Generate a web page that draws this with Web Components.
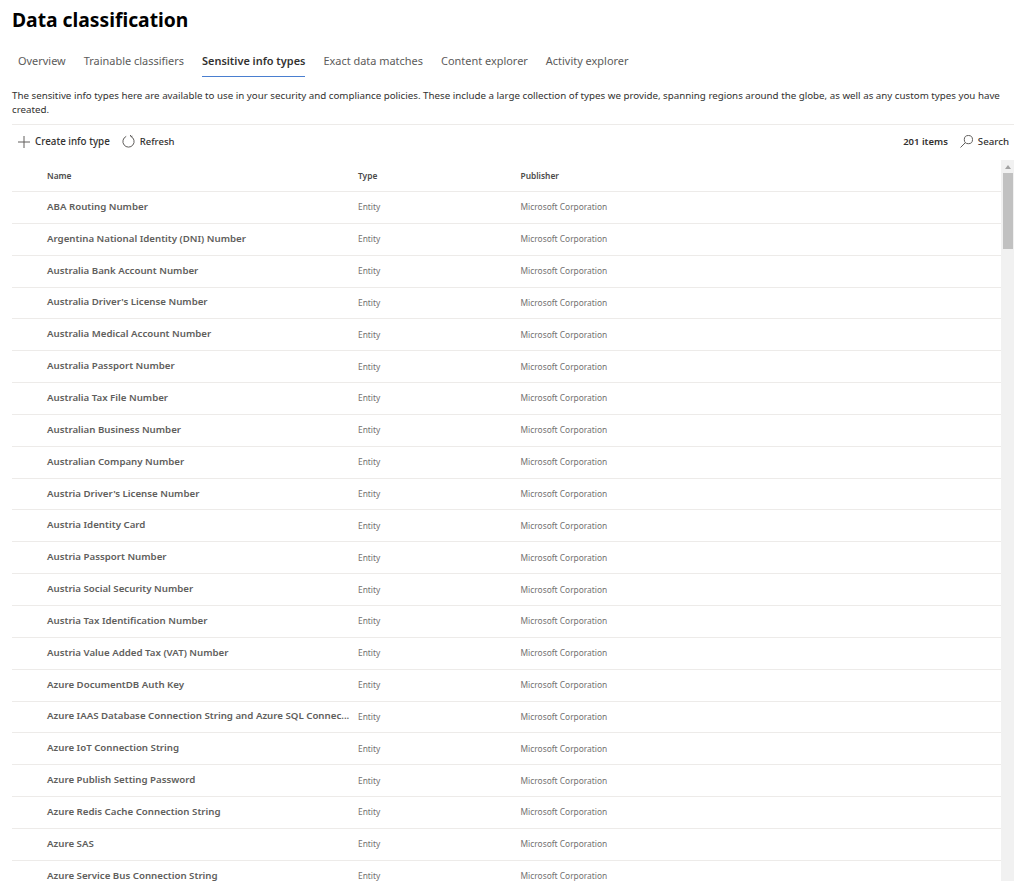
<!DOCTYPE html>
<html lang="en">
<head>
<meta charset="utf-8">
<title>Data classification</title>
<style>
  html, body { margin: 0; height: 881px; overflow: hidden; background: #fff; }
  body { font-family: "Noto Sans", "Open Sans", sans-serif; color: #323130; }
</style>
</head>
<body>
<dc-page></dc-page>

<script>
// Page header with the tab strip
class DcHeader extends HTMLElement {
  constructor() {
    super();
    this.attachShadow({ mode: 'open' });
    const tabs = ['Overview', 'Trainable classifiers', 'Sensitive info types', 'Exact data matches', 'Content explorer', 'Activity explorer'];
    this.shadowRoot.innerHTML = `
      <style>
        :host { display: block; }
        h1 { margin: 0; padding: 8px 0 0 0; font-size: 19.3px; line-height: 24px; font-weight: 700; color: #000; }
        nav { display: flex; gap: 18px; margin: 16px 0 0 6px; height: 29px; }
        a { font-size: 10.95px; line-height: 25px; height: 29px; box-sizing: border-box; color: #5c5b5a; white-space: nowrap; }
        a.on { color: #323130; font-weight: 600; border-bottom: 1.5px solid #4a7fd0; }
      </style>
      <h1>Data classification</h1>
      <nav>${tabs.map((t, i) => `<a class="${i === 2 ? 'on' : ''}">${t}</a>`).join('')}</nav>
    `;
  }
}

// Command bar under the description
class DcToolbar extends HTMLElement {
  constructor() {
    super();
    this.attachShadow({ mode: 'open' });
    this.shadowRoot.innerHTML = `
      <style>
        :host { display: flex; align-items: center; height: 33px; padding-bottom: 2px; border-top: 1px solid #edebe9; font-size: 9.8px; color: #323130; font-weight: 500; }
        .btn { display: flex; align-items: center; gap: 5px; white-space: nowrap; }
        svg { display: block; fill: none; stroke: #605e5c; stroke-width: 1; }
        .add { margin-left: 6px; }
        .refresh { margin-left: 12px; font-size: 9.5px; }
        .right { margin-left: auto; display: flex; align-items: center; padding-right: 5px; }
        .count { font-weight: 600; font-size: 9.5px; margin-right: 12px; }
        .search { font-size: 9.7px; }
      </style>
      <div class="btn add">
        <svg width="12" height="12" viewBox="0 0 12 12"><path d="M6 0v12M0 6h12"/></svg>
        <span>Create info type</span>
      </div>
      <div class="btn refresh">
        <svg width="13" height="13" viewBox="0 0 13 13"><path d="M4.2 1.4a5.6 5.6 0 1 0 4.6 0"/><path d="M8.9 1.5l-.6-1.5M8.9 1.5l1.5-.3"/></svg>
        <span>Refresh</span>
      </div>
      <div class="right">
        <span class="count">201 items</span>
        <div class="btn search">
          <svg width="13" height="13" viewBox="0 0 13 13"><circle cx="8.4" cy="4.6" r="4.1"/><path d="M5.4 7.6L.5 12.5"/></svg>
          <span>Search</span>
        </div>
      </div>
    `;
  }
}

// One row of the list
class DcRow extends HTMLElement {
  static get observedAttributes() { return ['name']; }
  constructor() {
    super();
    this.attachShadow({ mode: 'open' });
    this.shadowRoot.innerHTML = `
      <style>
        :host { display: grid; grid-template-columns: 311px 162.5px 1fr; align-items: center; height: 31.85px; box-sizing: border-box; padding-left: 35px; border-bottom: 1px solid #edebe9; }
        .name { font-size: 9.7px; font-weight: 600; color: #605e5c; white-space: nowrap; padding-bottom: 2px; }
        .cell { font-size: 8.4px; color: #737170; white-space: nowrap; padding-bottom: 1px; }
      </style>
      <div class="name"></div>
      <div class="cell">Entity</div>
      <div class="cell">Microsoft Corporation</div>
    `;
  }
  attributeChangedCallback(name, oldValue, newValue) {
    this.shadowRoot.querySelector('.name').textContent = newValue;
  }
}

// Scrollbar beside the list
class DcScrollbar extends HTMLElement {
  constructor() {
    super();
    this.attachShadow({ mode: 'open' });
    this.shadowRoot.innerHTML = `
      <style>
        :host { display: flex; flex-direction: column; align-items: center; width: 13px; background: #f1f1f1; flex: none; }
        .arrow { width: 0; height: 0; margin: 5px 0 4px; border: 3px solid transparent; border-top: 0; border-bottom: 4px solid #a3a3a3; }
        .thumb { width: 10px; height: 76px; background: #c1c1c1; }
      </style>
      <div class="arrow"></div>
      <div class="thumb"></div>
    `;
  }
}

// List with its column headings
class DcList extends HTMLElement {
  constructor() {
    super();
    this.attachShadow({ mode: 'open' });
    const names = ['ABA Routing Number', 'Argentina National Identity (DNI) Number', 'Australia Bank Account Number',
      "Australia Driver's License Number", 'Australia Medical Account Number', 'Australia Passport Number',
      'Australia Tax File Number', 'Australian Business Number', 'Australian Company Number',
      "Austria Driver's License Number", 'Austria Identity Card', 'Austria Passport Number',
      'Austria Social Security Number', 'Austria Tax Identification Number', 'Austria Value Added Tax (VAT) Number',
      'Azure DocumentDB Auth Key', 'Azure IAAS Database Connection String and Azure SQL Connec...',
      'Azure IoT Connection String', 'Azure Publish Setting Password', 'Azure Redis Cache Connection String',
      'Azure SAS', 'Azure Service Bus Connection String'];
    this.shadowRoot.innerHTML = `
      <style>
        :host { display: flex; height: 722px; overflow: hidden; }
        .rows { flex: 1; min-width: 0; }
        .head { display: grid; grid-template-columns: 311px 162.5px 1fr; align-items: center; height: 32px; box-sizing: border-box; padding: 0 0 1px 35px; border-bottom: 1px solid #edebe9; font-size: 8.4px; font-weight: 600; color: #4b4a49; }
      </style>
      <div class="rows">
        <div class="head"><span>Name</span><span>Type</span><span>Publisher</span></div>
        ${names.map(n => `<dc-row></dc-row>`).join('')}
      </div>
      <dc-scrollbar></dc-scrollbar>
    `;
    this.shadowRoot.querySelectorAll('dc-row').forEach((r, i) => r.setAttribute('name', names[i]));
  }
}

class DcPage extends HTMLElement {
  constructor() {
    super();
    this.attachShadow({ mode: 'open' });
    this.shadowRoot.innerHTML = `
      <style>
        :host { display: block; padding: 0 10px 0 12px; }
        p { margin: 12px 0 7px; font-size: 9.76px; line-height: 14px; color: #323130; }
      </style>
      <dc-header></dc-header>
      <p>The sensitive info types here are available to use in your security and compliance policies. These include a large collection of types we provide, spanning regions around the globe, as well as any custom types you have created.</p>
      <dc-toolbar></dc-toolbar>
      <dc-list></dc-list>
    `;
  }
}

customElements.define('dc-header', DcHeader);
customElements.define('dc-toolbar', DcToolbar);
customElements.define('dc-scrollbar', DcScrollbar);
customElements.define('dc-row', DcRow);
customElements.define('dc-list', DcList);
customElements.define('dc-page', DcPage);
</script>
</body>
</html>
